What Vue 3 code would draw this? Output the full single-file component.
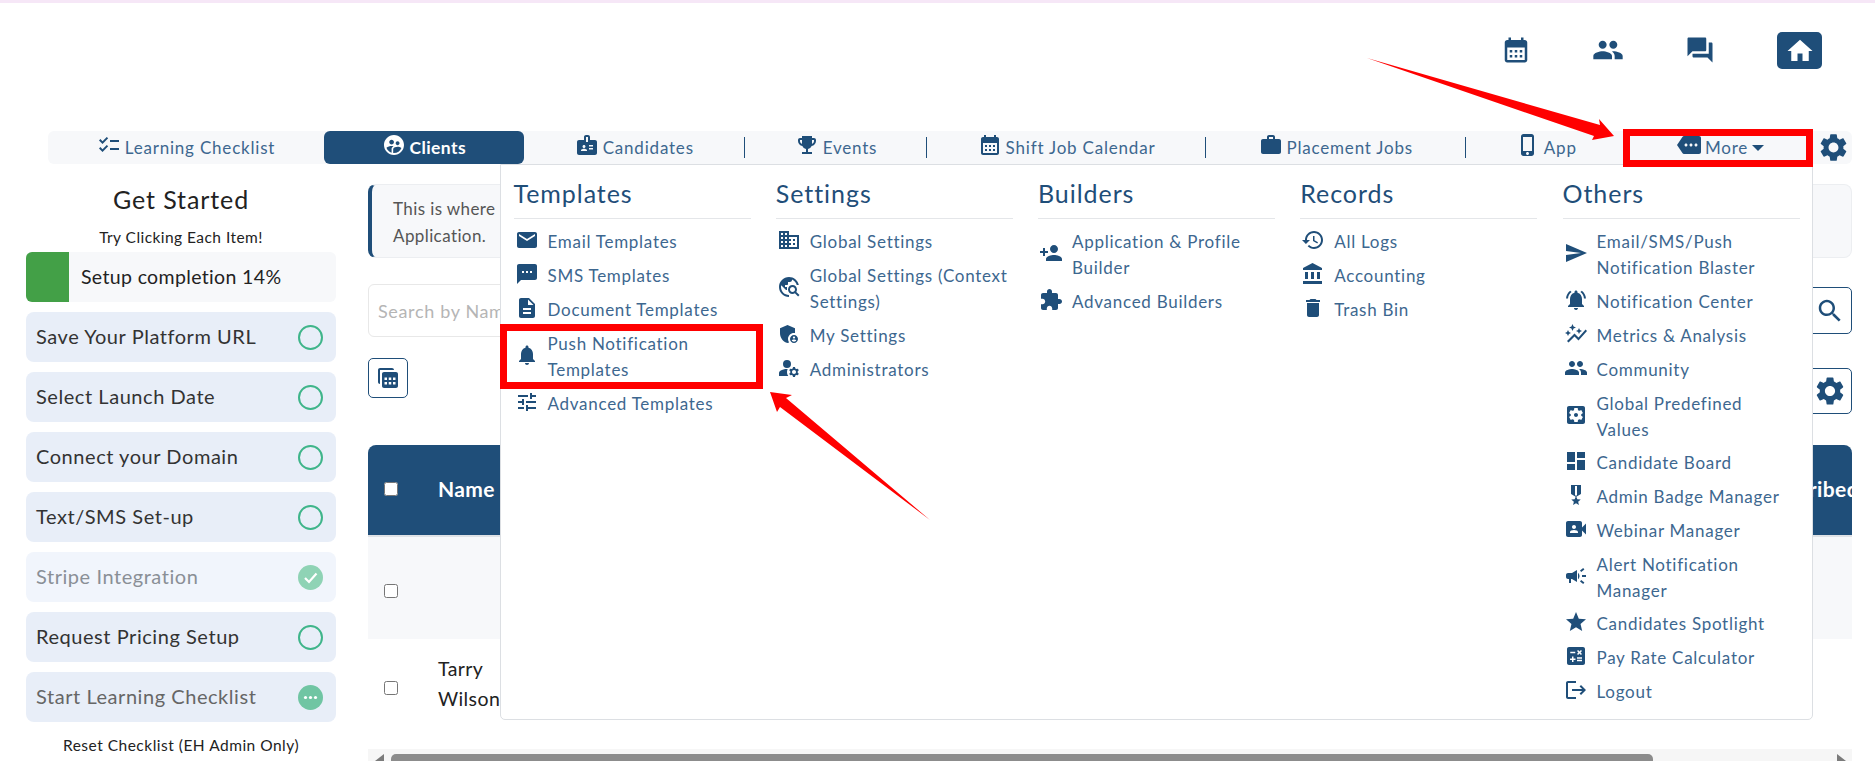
<script setup>
const P = {
  calendar: 'M19 4h-1V2h-2v2H8V2H6v2H5c-1.1 0-2 .9-2 2v14c0 1.1.9 2 2 2h14c1.1 0 2-.9 2-2V6c0-1.1-.9-2-2-2zm0 16H5V10h14v10zM9 14H7v-2h2v2zm4 0h-2v-2h2v2zm4 0h-2v-2h2v2zm-8 4H7v-2h2v2zm4 0h-2v-2h2v2zm4 0h-2v-2h2v2z',
  people: 'M16 11c1.66 0 2.99-1.34 2.99-3S17.66 5 16 5c-1.66 0-3 1.34-3 3s1.34 3 3 3zm-8 0c1.66 0 2.99-1.34 2.99-3S9.66 5 8 5C6.34 5 5 6.34 5 8s1.34 3 3 3zm0 2c-2.33 0-7 1.17-7 3.5V19h14v-2.5c0-2.33-4.67-3.5-7-3.5zm8 0c-.29 0-.62.02-.97.05 1.16.84 1.97 1.97 1.97 3.45V19h6v-2.5c0-2.33-4.67-3.5-7-3.5z',
  forum: 'M21 6h-2v9H6v2c0 .55.45 1 1 1h11l4 4V7c0-.55-.45-1-1-1zm-4 6V3c0-.55-.45-1-1-1H3c-.55 0-1 .45-1 1v14l4-4h10c.55 0 1-.45 1-1z',
  home: 'M10 20v-6h4v6h5v-8h3L12 3 2 12h3v8z',
  checklist: 'M22 7h-9v2h9V7zm0 8h-9v2h9v-2zM5.54 11 2 7.46l1.41-1.41 2.12 2.12 4.24-4.24 1.41 1.41L5.54 11zm0 8L2 15.46l1.41-1.41 2.12 2.12 4.24-4.24 1.41 1.41L5.54 19z',
  clients: 'M11.99 2c-5.52 0-10 4.48-10 10s4.48 10 10 10 10-4.48 10-10-4.48-10-10-10zm3.61 6.34c1.07 0 1.93.86 1.93 1.93 0 1.07-.86 1.93-1.93 1.93-1.07 0-1.93-.86-1.93-1.93-.01-1.07.86-1.93 1.93-1.93zm-6-1.58c1.3 0 2.36 1.06 2.36 2.36 0 1.3-1.06 2.36-2.36 2.36s-2.36-1.06-2.36-2.36c0-1.31 1.05-2.36 2.36-2.36zm0 9.13v3.75c-2.4-.75-4.3-2.6-5.14-4.96 1.05-1.12 3.67-1.69 5.14-1.69.53 0 1.2.08 1.9.22-1.64.87-1.9 2.02-1.9 2.68zM11.99 20c-.27 0-.53-.01-.79-.04v-4.07c0-1.42 2.94-2.13 4.4-2.13 1.07 0 2.92.39 3.84 1.15-1.17 2.97-4.06 5.09-7.45 5.09z',
  badge: 'M20 7h-5V4c0-1.1-.9-2-2-2h-2c-1.1 0-2 .9-2 2v3H4c-1.1 0-2 .9-2 2v11c0 1.1.9 2 2 2h16c1.1 0 2-.9 2-2V9c0-1.1-.9-2-2-2zM9 12c.83 0 1.5.67 1.5 1.5S9.83 15 9 15s-1.5-.67-1.5-1.5S8.17 12 9 12zm3 6H6v-.75c0-1 2-1.5 3-1.5s3 .5 3 1.5V18zm1-9h-2V4h2v5zm5 7.5h-4V15h4v1.5zm0-3h-4V12h4v1.5z',
  trophy: 'M19 5h-2V3H7v2H5c-1.1 0-2 .9-2 2v1c0 2.55 1.92 4.63 4.39 4.94.63 1.5 1.98 2.63 3.61 2.96V19H7v2h10v-2h-4v-3.1c1.63-.33 2.98-1.46 3.61-2.96C19.08 12.63 21 10.55 21 8V7c0-1.1-.9-2-2-2zM5 8V7h2v3.82C5.84 10.4 5 9.3 5 8zm14 0c0 1.3-.84 2.4-2 2.82V7h2v1z',
  work: 'M20 6h-4V4c0-1.1-.9-2-2-2h-4c-1.1 0-2 .9-2 2v2H4c-1.1 0-2 .9-2 2v11c0 1.1.9 2 2 2h16c1.1 0 2-.9 2-2V8c0-1.1-.9-2-2-2zm-6 0h-4V4h4v2z',
  phone: 'M15.5 1h-8C6.12 1 5 2.12 5 3.5v17C5 21.88 6.12 23 7.5 23h8c1.38 0 2.5-1.12 2.5-2.5v-17C18 2.12 16.88 1 15.5 1zm-4 21c-.83 0-1.5-.67-1.5-1.5s.67-1.5 1.5-1.5 1.5.67 1.5 1.5-.67 1.5-1.5 1.5zm4.5-4H7V4h9v14z',
  more: 'M22 3H7c-.69 0-1.23.35-1.59.88L0 12l5.41 8.11c.36.53.9.89 1.59.89h15c1.1 0 2-.9 2-2V5c0-1.1-.9-2-2-2zM9 13.5c-.83 0-1.5-.67-1.5-1.5s.67-1.5 1.5-1.5 1.5.67 1.5 1.5-.67 1.5-1.5 1.5zm5 0c-.83 0-1.5-.67-1.5-1.5s.67-1.5 1.5-1.5 1.5.67 1.5 1.5-.67 1.5-1.5 1.5zm5 0c-.83 0-1.5-.67-1.5-1.5s.67-1.5 1.5-1.5 1.5.67 1.5 1.5-.67 1.5-1.5 1.5z',
  settings: 'M19.14 12.94c.04-.3.06-.61.06-.94 0-.32-.02-.64-.07-.94l2.03-1.58c.18-.14.23-.41.12-.61l-1.92-3.32c-.12-.22-.37-.29-.59-.22l-2.39.96c-.5-.38-1.03-.7-1.62-.94l-.36-2.54c-.04-.24-.24-.41-.48-.41h-3.84c-.24 0-.43.17-.47.41l-.36 2.54c-.59.24-1.13.57-1.62.94l-2.39-.96c-.22-.08-.47 0-.59.22L2.74 8.87c-.12.21-.08.47.12.61l2.03 1.58c-.05.3-.09.63-.09.94s.02.64.07.94l-2.03 1.58c-.18.14-.23.41-.12.61l1.92 3.32c.12.22.37.29.59.22l2.39-.96c.5.38 1.03.7 1.62.94l.36 2.54c.05.24.24.41.48.41h3.84c.24 0 .44-.17.47-.41l.36-2.54c.59-.24 1.13-.56 1.62-.94l2.39.96c.22.08.47 0 .59-.22l1.92-3.32c.12-.22.07-.47-.12-.61l-2.01-1.58zM12 15.6c-1.98 0-3.6-1.62-3.6-3.6s1.62-3.6 3.6-3.6 3.6 1.62 3.6 3.6-1.62 3.6-3.6 3.6z',
  email: 'M20 4H4c-1.1 0-1.99.9-1.99 2L2 18c0 1.1.9 2 2 2h16c1.1 0 2-.9 2-2V6c0-1.1-.9-2-2-2zm0 4-8 5-8-5V6l8 5 8-5v2z',
  sms: 'M20 2H4c-1.1 0-1.99.9-1.99 2L2 22l4-4h14c1.1 0 2-.9 2-2V4c0-1.1-.9-2-2-2zM9 11H7V9h2v2zm4 0h-2V9h2v2zm4 0h-2V9h2v2z',
  doc: 'M14 2H6c-1.1 0-1.99.9-1.99 2L4 20c0 1.1.89 2 1.99 2H18c1.1 0 2-.9 2-2V8l-6-6zm2 16H8v-2h8v2zm0-4H8v-2h8v2zm-3-5V3.5L18.5 9H13z',
  bell: 'M12 22c1.1 0 2-.9 2-2h-4c0 1.1.89 2 2 2zm6-6v-5c0-3.07-1.64-5.64-4.5-6.32V4c0-.83-.67-1.5-1.5-1.5s-1.5.67-1.5 1.5v.68C7.63 5.36 6 7.92 6 11v5l-2 2v1h16v-1l-2-2z',
  tune: 'M3 17v2h6v-2H3zM3 5v2h10V5H3zm10 16v-2h8v-2h-8v-2h-2v6h2zM7 9v2H3v2h4v2h2V9H7zm14 4v-2H11v2h10zm-6-4h2V7h4V5h-4V3h-2v6z',
  domain: 'M12 7V3H2v18h20V7H12zM6 19H4v-2h2v2zm0-4H4v-2h2v2zm0-4H4V9h2v2zm0-4H4V5h2v2zm4 12H8v-2h2v2zm0-4H8v-2h2v2zm0-4H8V9h2v2zm0-4H8V5h2v2zm10 12h-8v-2h2v-2h-2v-2h2v-2h-2V9h8v10zm-2-8h-2v2h2v-2zm0 4h-2v2h2v-2z',
  travel: 'M19.3 16.9c.4-.7.7-1.5.7-2.4 0-2.5-2-4.5-4.5-4.5S11 12 11 14.5s2 4.5 4.5 4.5c.9 0 1.7-.3 2.4-.7l3.2 3.2 1.4-1.4-3.2-3.2zm-3.8.1c-1.4 0-2.5-1.1-2.5-2.5s1.1-2.5 2.5-2.5 2.5 1.1 2.5 2.5-1.1 2.5-2.5 2.5zM12 20v2C6.48 22 2 17.52 2 12S6.48 2 12 2c4.84 0 8.87 3.44 9.8 8h-2.07c-.64-2.46-2.4-4.47-4.73-5.41V5c0 1.1-.9 2-2 2h-2v2c0 .55-.45 1-1 1H8v2h2v3H9l-4.79-4.79C4.08 10.79 4 11.38 4 12c0 4.41 3.59 8 8 8z',
  shield: 'M17 11c.34 0 .67.04 1 .09V6.27L10.5 3 3 6.27v4.91c0 4.54 3.2 8.79 7.5 9.82.55-.13 1.08-.32 1.6-.55-.69-.98-1.1-2.17-1.1-3.45 0-3.31 2.69-6 6-6zM17 13c-2.21 0-4 1.79-4 4s1.79 4 4 4 4-1.79 4-4-1.79-4-4-4zm0 1.38c.62 0 1.12.51 1.12 1.12s-.51 1.12-1.12 1.12-1.12-.51-1.12-1.12.5-1.12 1.12-1.12zm0 5.37c-.93 0-1.74-.46-2.24-1.17.05-.72 1.51-1.08 2.24-1.08s2.19.36 2.24 1.08c-.5.71-1.31 1.17-2.24 1.17z',
  manage: 'M10.67 13.02c-.22-.01-.44-.02-.67-.02-2.42 0-4.68.67-6.61 1.82-.88.52-1.39 1.5-1.39 2.53V20h9.26c-.79-1.13-1.26-2.51-1.26-4 0-1.07.25-2.07.67-2.98zM10 12a4 4 0 1 0 0-8 4 4 0 0 0 0 8zM20.75 16c0-.22-.03-.42-.06-.63l1.14-1.01-1-1.73-1.45.49c-.32-.27-.68-.48-1.08-.63L18 11h-2l-.3 1.49c-.4.15-.76.36-1.08.63l-1.45-.49-1 1.73 1.14 1.01c-.03.21-.06.41-.06.63s.03.42.06.63l-1.14 1.01 1 1.73 1.45-.49c.32.27.68.48 1.08.63L16 21h2l.3-1.49c.4-.15.76-.36 1.08-.63l1.45.49 1-1.73-1.14-1.01c.03-.21.06-.41.06-.63zM17 18c-1.1 0-2-.9-2-2s.9-2 2-2 2 .9 2 2-.9 2-2 2z',
  personAdd: 'M15 12c2.21 0 4-1.79 4-4s-1.79-4-4-4-4 1.79-4 4 1.79 4 4 4zm-9-2V7H4v3H1v2h3v3h2v-3h3v-2H6zm9 4c-2.67 0-8 1.34-8 4v2h16v-2c0-2.66-5.33-4-8-4z',
  puzzle: 'M20.5 11H19V7c0-1.1-.9-2-2-2h-4V3.5C13 2.12 11.88 1 10.5 1S8 2.12 8 3.5V5H4c-1.1 0-1.99.9-1.99 2v3.8H3.5c1.49 0 2.7 1.21 2.7 2.7s-1.21 2.7-2.7 2.7H2V20c0 1.1.9 2 2 2h3.8v-1.5c0-1.49 1.21-2.7 2.7-2.7 1.49 0 2.7 1.21 2.7 2.7V22H17c1.1 0 2-.9 2-2v-4h1.5c1.38 0 2.5-1.12 2.5-2.5S21.88 11 20.5 11z',
  history: 'M13 3c-4.97 0-9 4.03-9 9H1l3.89 3.89.07.14L9 12H6c0-3.87 3.13-7 7-7s7 3.13 7 7-3.13 7-7 7c-1.93 0-3.68-.79-4.94-2.06l-1.42 1.42C8.27 19.99 10.51 21 13 21c4.97 0 9-4.03 9-9s-4.03-9-9-9zm-1 5v5l4.28 2.54.72-1.21-3.5-2.08V8H12z',
  bank: 'M4 10v7h3v-7H4zm6 0v7h3v-7h-3zM2 22h19v-3H2v3zm14-12v7h3v-7h-3zm-4.5-9L2 6v2h19V6l-9.5-5z',
  trash: 'M6 19c0 1.1.9 2 2 2h8c1.1 0 2-.9 2-2V7H6v12zM19 4h-3.5l-1-1h-5l-1 1H5v2h14V4z',
  send: 'M2.01 21 23 12 2.01 3 2 10l15 2-15 2z',
  bellActive: 'M7.58 4.08 6.15 2.65C3.75 4.48 2.17 7.3 2.03 10.5h2c.15-2.65 1.51-4.97 3.55-6.42zm12.39 6.42h2c-.15-3.2-1.73-6.02-4.12-7.85l-1.42 1.43c2.02 1.45 3.39 3.77 3.54 6.42zM18 11c0-3.07-1.64-5.64-4.5-6.32V4c0-.83-.67-1.5-1.5-1.5s-1.5.67-1.5 1.5v.68C7.63 5.36 6 7.92 6 11v5l-2 2v1h16v-1l-2-2v-5zm-6 11c.14 0 .27-.01.4-.04.65-.14 1.18-.58 1.44-1.18.1-.24.15-.5.15-.78h-4c.01 1.1.9 2 2.01 2z',
  graph: 'M14.06 9.94 12 9l2.06-.94L15 6l.94 2.06L18 9l-2.06.94L15 12l-.94-2.06zM4 14l.94-2.06L7 11l-2.06-.94L4 8l-.94 2.06L1 11l2.06.94L4 14zm4.5-5 1.09-2.41L12 5.5 9.59 4.41 8.5 2 7.41 4.41 5 5.5l2.41 1.09L8.5 9zm-4 11.5 6-6.01 4 4L23 8.93l-1.41-1.41-7.09 7.97-4-4L3 19l1.5 1.5z',
  gearBox: 'M12 10c-1.1 0-2 .9-2 2s.9 2 2 2 2-.9 2-2-.9-2-2-2zm7-7H5c-1.11 0-2 .9-2 2v14c0 1.1.89 2 2 2h14c1.11 0 2-.9 2-2V5c0-1.1-.89-2-2-2zm-1.75 9c0 .23-.02.46-.05.68l1.48 1.16c.13.11.17.3.08.45l-1.4 2.42c-.09.15-.27.21-.43.15l-1.74-.7c-.36.28-.76.51-1.18.69l-.26 1.85c-.03.17-.18.3-.35.3h-2.8c-.17 0-.32-.13-.35-.29l-.26-1.85c-.43-.18-.82-.41-1.18-.69l-1.74.7c-.16.06-.34 0-.43-.15l-1.4-2.42c-.09-.15-.05-.34.08-.45l1.48-1.16c-.03-.23-.05-.46-.05-.69 0-.23.02-.46.05-.68l-1.48-1.16c-.13-.11-.17-.3-.08-.45l1.4-2.42c.09-.15.27-.21.43-.15l1.74.7c.36-.28.76-.51 1.18-.69l.26-1.85c.03-.17.18-.3.35-.3h2.8c.17 0 .32.13.35.29l.26 1.85c.43.18.82.41 1.18.69l1.74-.7c.16-.06.34 0 .43.15l1.4 2.42c.09.15.05.34-.08.45l-1.48 1.16c.03.23.05.46.05.69z',
  dashboard: 'M3 13h8V3H3v10zm0 8h8v-6H3v6zm10 0h8V11h-8v10zm0-18v6h8V3h-8z',
  medal: 'M17 10.43V2H7v8.43c0 .35.18.68.49.86l4.18 2.51-.99 2.34-3.41.29 2.59 2.24L9.07 22 12 20.23 14.93 22l-.78-3.33 2.59-2.24-3.41-.29-.99-2.34 4.18-2.51c.3-.18.48-.5.48-.86zm-4 1.8-1 .6-1-.6V3h2v9.23z',
  video: 'M18 10.48V6c0-1.1-.9-2-2-2H4c-1.1 0-2 .9-2 2v12c0 1.1.9 2 2 2h12c1.1 0 2-.9 2-2v-4.48l4 3.98v-11l-4 3.98zM10 8c1.1 0 2 .9 2 2s-.9 2-2 2-2-.9-2-2 .9-2 2-2zm4 8H6v-.57c0-.81.48-1.53 1.22-1.85.85-.37 1.79-.58 2.78-.58.99 0 1.93.21 2.78.58.74.32 1.22 1.04 1.22 1.85V16z',
  campaign: 'M18 11v2h4v-2h-4zm-2 6.61c.96.71 2.21 1.65 3.2 2.39.4-.53.8-1.07 1.2-1.6-.99-.74-2.24-1.68-3.2-2.4-.4.54-.8 1.08-1.2 1.61zM20.4 5.6c-.4-.53-.8-1.07-1.2-1.6-.99.74-2.24 1.68-3.2 2.4.4.53.8 1.07 1.2 1.6.96-.72 2.21-1.65 3.2-2.4zM4 9c-1.1 0-2 .9-2 2v2c0 1.1.9 2 2 2h1v4h2v-4h1l5 3V6L8 9H4zm11.5 3c0-1.33-.58-2.53-1.5-3.35v6.69c.92-.81 1.5-2.01 1.5-3.34z',
  star: 'M12 17.27 18.18 21l-1.64-7.03L22 9.24l-7.19-.61L12 2 9.19 8.63 2 9.24l5.46 4.73L5.82 21z',
  calc: 'M19 3H5c-1.1 0-2 .9-2 2v14c0 1.1.9 2 2 2h14c1.1 0 2-.9 2-2V5c0-1.1-.9-2-2-2zm-5.97 4.06L14.09 6l1.41 1.41L16.91 6l1.06 1.06-1.41 1.41 1.41 1.41-1.06 1.06-1.41-1.4-1.41 1.41-1.06-1.06 1.41-1.41-1.41-1.42zM6.25 7.72h5v1.5h-5v-1.5zM11.5 16h-2v2H8v-2H6v-1.5h2v-2h1.5v2h2V16zm6.5 1.25h-5v-1.5h5v1.5zm0-2.5h-5v-1.5h5v1.5z',
  logout: 'M17 7l-1.41 1.41L18.17 11H8v2h10.17l-2.58 2.58L17 17l5-5zM4 5h8V3H4c-1.1 0-2 .9-2 2v14c0 1.1.9 2 2 2h8v-2H4V5z',
  search: 'M15.5 14h-.79l-.28-.27C15.41 12.59 16 11.11 16 9.5 16 5.91 13.09 3 9.5 3S3 5.91 3 9.5 5.91 16 9.5 16c1.61 0 3.09-.59 4.23-1.57l.27.28v.79l5 4.99L20.49 19l-4.99-5zm-6 0C7.01 14 5 11.99 5 9.5S7.01 5 9.5 5 14 7.01 14 9.5 11.99 14 9.5 14z',
  stack: 'M4 2h12c1.1 0 2 .9 2 2H4v14c-1.1 0-2-.9-2-2V4c0-1.1.9-2 2-2zM8 6h12c1.1 0 2 .9 2 2v12c0 1.1-.9 2-2 2H8c-1.1 0-2-.9-2-2V8c0-1.1.9-2 2-2zM8.5 11.5V14H11v-2.5H8.5zm4.25 0V14h2.5v-2.5h-2.5zm4.25 0V14h2.5v-2.5H17zM8.5 16v2.5H11V16H8.5zm4.25 0v2.5h2.5V16h-2.5zM17 16v2.5h2.5V16H17z',
}

const tabs = [
  { label: 'Learning Checklist', icon: 'checklist' },
  { label: 'Clients', icon: 'clients', active: true },
  { label: 'Candidates', icon: 'badge', sep: true },
  { label: 'Events', icon: 'trophy', sep: true },
  { label: 'Shift Job Calendar', icon: 'calendar', sep: true },
  { label: 'Placement Jobs', icon: 'work', sep: true },
  { label: 'App', icon: 'phone' },
]

const steps = [
  { label: 'Save Your Platform URL', state: 'open' },
  { label: 'Select Launch Date', state: 'open' },
  { label: 'Connect your Domain', state: 'open' },
  { label: 'Text/SMS Set-up', state: 'open' },
  { label: 'Stripe Integration', state: 'done' },
  { label: 'Request Pricing Setup', state: 'open' },
  { label: 'Start Learning Checklist', state: 'busy' },
]

const menu = [
  { title: 'Templates', items: [
    { label: 'Email Templates', icon: 'email' },
    { label: 'SMS Templates', icon: 'sms' },
    { label: 'Document Templates', icon: 'doc' },
    { label: 'Push Notification\nTemplates', icon: 'bell' },
    { label: 'Advanced Templates', icon: 'tune' },
  ] },
  { title: 'Settings', items: [
    { label: 'Global Settings', icon: 'domain' },
    { label: 'Global Settings (Context\nSettings)', icon: 'travel' },
    { label: 'My Settings', icon: 'shield' },
    { label: 'Administrators', icon: 'manage' },
  ] },
  { title: 'Builders', items: [
    { label: 'Application & Profile\nBuilder', icon: 'personAdd' },
    { label: 'Advanced Builders', icon: 'puzzle' },
  ] },
  { title: 'Records', items: [
    { label: 'All Logs', icon: 'history' },
    { label: 'Accounting', icon: 'bank' },
    { label: 'Trash Bin', icon: 'trash' },
  ] },
  { title: 'Others', items: [
    { label: 'Email/SMS/Push\nNotification Blaster', icon: 'send' },
    { label: 'Notification Center', icon: 'bellActive' },
    { label: 'Metrics & Analysis', icon: 'graph' },
    { label: 'Community', icon: 'people' },
    { label: 'Global Predefined\nValues', icon: 'gearBox' },
    { label: 'Candidate Board', icon: 'dashboard' },
    { label: 'Admin Badge Manager', icon: 'medal' },
    { label: 'Webinar Manager', icon: 'video' },
    { label: 'Alert Notification\nManager', icon: 'campaign' },
    { label: 'Candidates Spotlight', icon: 'star' },
    { label: 'Pay Rate Calculator', icon: 'calc' },
    { label: 'Logout', icon: 'logout' },
  ] },
]
</script>

<template>
  <div class="page">
    <div class="topline"></div>

    <header class="topbar">
      <svg class="top-icon" viewBox="0 0 24 24"><path :d="P.calendar" /></svg>
      <svg class="top-icon people" viewBox="0 0 24 24"><path :d="P.people" /></svg>
      <svg class="top-icon" viewBox="0 0 24 24"><path :d="P.forum" /></svg>
      <button class="home"><svg class="home-icon" viewBox="0 0 24 24"><path :d="P.home" /></svg></button>
    </header>

    <nav class="tabs">
      <div v-for="t in tabs" :key="t.label" class="tab" :class="{ active: t.active, sep: t.sep }">
        <svg class="tab-icon" viewBox="0 0 24 24"><path :d="P[t.icon]" /></svg>
        <span>{{ t.label }}</span>
      </div>
      <div class="tab">
        <svg class="tab-icon" viewBox="0 0 24 24"><path :d="P.more" /></svg>
        <span>More</span>
        <i class="caret"></i>
      </div>
      <div class="tab gear">
        <svg class="gear-icon" viewBox="0 0 24 24"><path :d="P.settings" /></svg>
      </div>
    </nav>

    <div class="content">
      <aside class="side">
        <h2 class="side-title">Get Started</h2>
        <p class="side-sub">Try Clicking Each Item!</p>
        <div class="progress">
          <div class="progress-fill"></div>
          <span>Setup completion 14%</span>
        </div>
        <div v-for="s in steps" :key="s.label" class="step" :class="s.state">
          <span class="step-label">{{ s.label }}</span>
          <i class="ring" v-if="s.state === 'open'"></i>
          <svg v-else-if="s.state === 'done'" class="state" viewBox="0 0 25 25">
            <circle cx="12.5" cy="12.5" r="12.5" fill="#8fd3b5" />
            <path d="M7 13l4 4 7.5-8.5" fill="none" stroke="#fff" stroke-width="2.2" />
          </svg>
          <svg v-else class="state" viewBox="0 0 25 25">
            <circle cx="12.5" cy="12.5" r="12.5" fill="#70c5a3" />
            <circle cx="7.5" cy="12.5" r="1.6" fill="#fff" />
            <circle cx="12.5" cy="12.5" r="1.6" fill="#fff" />
            <circle cx="17.5" cy="12.5" r="1.6" fill="#fff" />
          </svg>
        </div>
        <p class="reset">Reset Checklist (EH Admin Only)</p>
      </aside>

      <main class="main">
        <div class="info">This is where<br />Application.</div>
        <div class="search-row">
          <input class="search" type="text" placeholder="Search by Name" />
          <button class="icon-btn search-btn"><svg viewBox="0 0 24 24"><path :d="P.search" /></svg></button>
        </div>
        <div class="tool-row">
          <button class="icon-btn calc-btn"><svg viewBox="0 0 24 24"><path :d="P.stack" fill-rule="evenodd" /></svg></button>
          <button class="icon-btn gear-btn"><svg viewBox="0 0 24 24"><path :d="P.settings" /></svg></button>
        </div>
        <div class="table">
          <div class="thead">
            <input type="checkbox" class="check head-check" />
            <span class="th-name">Name</span>
            <span class="th-last">Subscribed</span>
          </div>
          <div class="row shaded"><input type="checkbox" class="check" /></div>
          <div class="row">
            <input type="checkbox" class="check" />
            <span class="cell-name">Tarry<br />Wilson</span>
          </div>
        </div>
        <div class="hscroll">
          <i class="arrow left"></i>
          <div class="thumb"></div>
          <i class="arrow right"></i>
        </div>
      </main>
    </div>

    <div class="menu">
      <section v-for="c in menu" :key="c.title" class="menu-col">
        <h3 class="menu-title">{{ c.title }}</h3>
        <a v-for="i in c.items" :key="i.label" class="menu-item">
          <svg class="menu-icon" viewBox="0 0 24 24"><path :d="P[i.icon]" /></svg>
          <span>{{ i.label }}</span>
        </a>
      </section>
    </div>

    <div class="mark mark-more"></div>
    <div class="mark mark-push"></div>
    <svg class="arrows" viewBox="0 0 1875 761">
      <polygon points="1367,58 1600,125 1599,119 1614,136 1592,140 1594,136" fill="#ff0000" />
      <polygon points="770,392 792,395 786,398 930,520 780,407 777,412" fill="#ff0000" />
    </svg>
  </div>
</template>

<style scoped>
.page {
  position: relative;
  width: 1875px;
  height: 761px;
  overflow: hidden;
  background: #fff;
  font-family: "Lato", "Open Sans", sans-serif;
  color: #222;
}
svg { fill: #1f4e79; display: block; flex: none; }
button { padding: 0; cursor: pointer; }

.topline { height: 3px; background: #f6e7f7; }

.topbar {
  height: 128px;
  box-sizing: border-box;
  padding: 29px 53px 0 0;
  display: flex;
  justify-content: flex-end;
  align-items: flex-start;
  gap: 62px;
}
.top-icon { width: 30px; height: 30px; margin-top: 3px; }
.top-icon.people { width: 32px; height: 32px; margin: 2px -1px 0; }
.home {
  width: 45px;
  height: 37px;
  border: 0;
  border-radius: 5px;
  background: #1f4e79;
  display: flex;
  align-items: center;
  justify-content: center;
}
.home-icon { width: 30px; height: 30px; fill: #fff; }

.tabs {
  margin: 0 23px 0 48px;
  height: 33px;
  border-radius: 6px;
  background: #f7f8fa;
  display: grid;
  grid-template-columns: 276px 199.5px 221.5px 182px 279px 259.5px 161.5px 187px 1fr;
  font-size: 17px;
  letter-spacing: 0.8px;
  color: #3d678f;
}
.tab {
  position: relative;
  display: flex;
  align-items: center;
  justify-content: center;
  gap: 4px;
}
.tab.sep::after {
  content: "";
  position: absolute;
  right: 0;
  top: 6px;
  height: 21px;
  width: 1px;
  background: #1f4e79;
}
.tab.active {
  background: #1f4e79;
  color: #fff;
  border-radius: 6px;
  font-size: 17.5px;
  font-weight: 700;
  letter-spacing: 0.4px;
}
.tab-icon { width: 24px; height: 24px; margin-bottom: 5px; }
.tab.active .tab-icon { fill: #fff; }
.caret {
  margin-left: 0;
  border-left: 6px solid transparent;
  border-right: 6px solid transparent;
  border-top: 6px solid #1f4e79;
}
.gear-icon { width: 33px; height: 33px; }

.content {
  margin-top: 20px;
  padding: 0 23px 0 26px;
  display: grid;
  grid-template-columns: 310px 1fr;
  column-gap: 32px;
}

.side { display: flex; flex-direction: column; }
.side-title {
  margin: 0;
  font-size: 25px;
  font-weight: 400;
  line-height: 30px;
  text-align: center;
  letter-spacing: 0.9px;
}
.side-sub {
  margin: 12px 0 4px;
  font-size: 15.5px;
  line-height: 22px;
  text-align: center;
  letter-spacing: 0.45px;
}
.progress {
  height: 50px;
  display: flex;
  align-items: center;
  gap: 12px;
  border-radius: 6px;
  background: #f7f8fa;
  font-size: 19.5px;
  letter-spacing: 0.35px;
  margin-bottom: 10px;
}
.progress span { padding-bottom: 2px; }
.progress-fill {
  width: 43px;
  height: 100%;
  background: #43a047;
  border-radius: 6px 0 0 6px;
}
.step {
  height: 50px;
  box-sizing: border-box;
  padding: 0 13px 0 10px;
  margin-bottom: 10px;
  display: flex;
  align-items: center;
  justify-content: space-between;
  border-radius: 8px;
  background: #e8eef8;
  font-size: 20px;
  letter-spacing: 0.55px;
  color: #333;
}
.step-label { padding-bottom: 2px; }
.step.done { background: #f1f5fc; color: #8a8f96; }
.step.busy { color: #666; }
.ring {
  width: 25px;
  height: 25px;
  box-sizing: border-box;
  border: 2.5px solid #3fb58a;
  border-radius: 50%;
}
.state { width: 25px; height: 25px; }
.reset {
  margin: 2px 0 0;
  font-size: 15.5px;
  line-height: 22px;
  text-align: center;
  letter-spacing: 0.5px;
}

.main { display: flex; flex-direction: column; min-width: 0; }
.info {
  height: 74px;
  box-sizing: border-box;
  padding: 10px 21px;
  border: 1px solid #eceef1;
  border-left: 4px solid #1f4e79;
  border-radius: 8px;
  background: #f7f8fa;
  font-size: 17px;
  line-height: 27px;
  letter-spacing: 0.4px;
  color: #555;
}
.search-row {
  margin-top: 26px;
  display: flex;
  align-items: center;
  gap: 10px;
}
.search {
  flex: 1;
  min-width: 0;
  height: 53px;
  box-sizing: border-box;
  padding: 0 9px;
  border: 1px solid #e8e8e8;
  border-radius: 6px;
  font: 18px "Lato", sans-serif;
  letter-spacing: 0.65px;
  outline: none;
}
.search::placeholder { color: #b5b5b5; }
.icon-btn {
  box-sizing: border-box;
  display: flex;
  align-items: center;
  justify-content: center;
  border: 1px solid #1f4e79;
  border-radius: 5px;
  background: #fff;
}
.search-btn { width: 45px; height: 47px; }
.search-btn svg { width: 30px; height: 30px; }
.tool-row {
  margin-top: 21px;
  display: flex;
  justify-content: space-between;
  align-items: flex-start;
}
.calc-btn { width: 40px; height: 40px; }
.calc-btn svg { width: 24px; height: 24px; }
.gear-btn { width: 45px; height: 46px; margin-top: 10px; }
.gear-btn svg { width: 34px; height: 34px; }

.table { margin-top: 31px; }
.thead {
  height: 92px;
  box-sizing: border-box;
  padding-left: 16px;
  display: flex;
  align-items: center;
  overflow: hidden;
  border-bottom: 2px solid #dfe2e6;
  border-radius: 8px 8px 0 0;
  background: #1f4e79;
  color: #fff;
  font-size: 21px;
  font-weight: 700;
  letter-spacing: 0.4px;
}
.check { width: 14px; height: 14px; margin: 0; flex: none; }
.head-check { margin-top: -2px; }
.th-name { margin-left: 40px; margin-bottom: 3px; }
.th-last { margin-left: auto; margin-right: -7px; margin-bottom: 3px; }
.row {
  display: flex;
  align-items: center;
  padding-left: 16px;
  height: 98px;
  font-size: 19.5px;
  line-height: 30px;
  letter-spacing: 0.4px;
}
.row.shaded { height: 102px; padding-top: 6px; box-sizing: border-box; background: #f7f8fa; }
.cell-name { margin-left: 40px; margin-top: -8px; }

.hscroll {
  margin-top: 12px;
  height: 12px;
  padding: 5px 6px 0 7px;
  box-sizing: border-box;
  display: flex;
  background: #f6f6f6;
  overflow: hidden;
}
.thumb {
  width: 1262px;
  height: 12px;
  margin-left: 7px;
  border-radius: 5px;
  background: #8c8c8c;
}
.arrow {
  width: 9px;
  height: 14px;
  background: #7b7b7b;
}
.arrow.left { clip-path: polygon(100% 0, 0 50%, 100% 100%); }
.arrow.right { margin-left: auto; clip-path: polygon(0 0, 100% 50%, 0 100%); }

.menu {
  position: absolute;
  left: 499.5px;
  top: 164px;
  width: 1313.5px;
  height: 556px;
  box-sizing: border-box;
  padding: 13px 13px 0 13px;
  display: grid;
  grid-template-columns: repeat(5, 237px);
  column-gap: 25.25px;
  align-items: start;
  background: #fff;
  border: 1px solid #dcdfe3;
  border-radius: 0 0 5px 5px;
}
.menu-title {
  margin: 0 0 6.5px;
  padding-bottom: 10px;
  border-bottom: 1px solid #e4e6e9;
  font-size: 25px;
  font-weight: 400;
  line-height: 30px;
  letter-spacing: 0.95px;
  color: #1f4e79;
}
.menu-item {
  display: flex;
  align-items: center;
  gap: 9px;
  padding: 3.9px 0 3.9px 1px;
  font-size: 17px;
  line-height: 26px;
  letter-spacing: 0.72px;
  color: #3d678f;
  white-space: pre-line;
}
.menu-icon { width: 24px; height: 24px; margin: -2px 0 2px; }

.mark {
  position: absolute;
  box-sizing: border-box;
  border: 7px solid #ff0000;
}
.mark-more { left: 1623px; top: 129px; width: 190px; height: 38px; }
.mark-push { left: 500px; top: 324px; width: 263px; height: 65px; }
.arrows {
  position: absolute;
  left: 0;
  top: 0;
  width: 1875px;
  height: 761px;
  pointer-events: none;
}
</style>

<style>
html, body { margin: 0; overflow: hidden; }
</style>
